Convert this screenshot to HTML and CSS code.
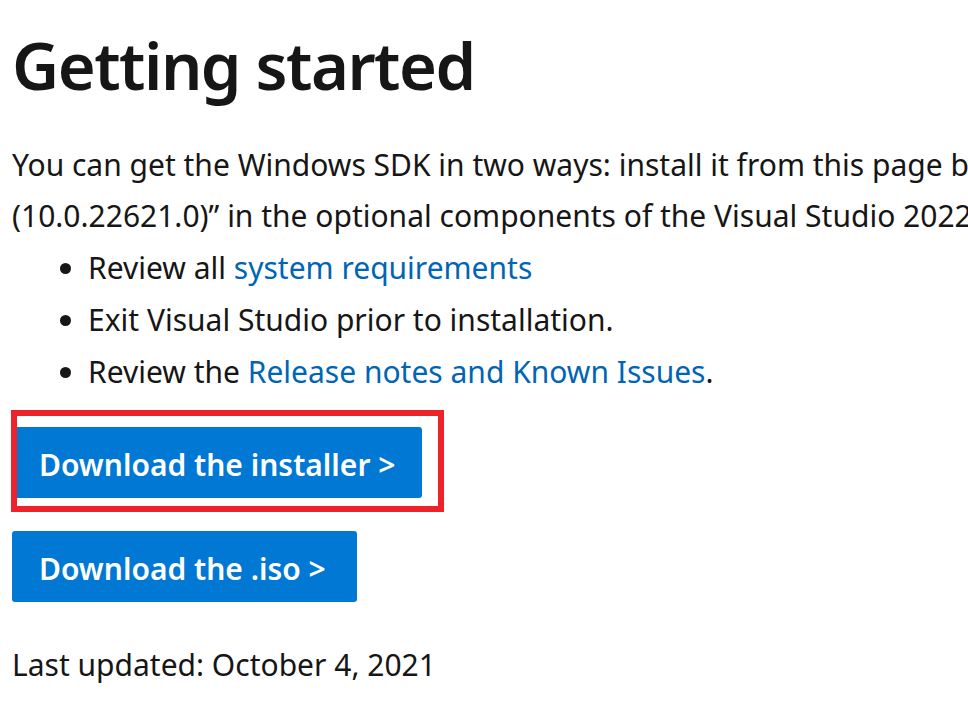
FILE: index.html
```html
<!DOCTYPE html>
<html lang="en">
<head>
<meta charset="utf-8">
<title>Getting started</title>
<link rel="stylesheet" href="styles.css">
</head>
<body>
<main class="content">
  <h1 class="title">Getting started</h1>
  <p class="intro">You can get the Windows SDK in two ways: install it from this page by selecting the download link or by selecting “Windows 11 SDK<br>(10.0.22621.0)” in the optional components of the Visual Studio 2022 Installer.</p>
  <ul class="checklist">
    <li>Review all <a href="#" class="link">system requirements</a></li>
    <li>Exit Visual Studio prior to installation.</li>
    <li>Review the <a href="#" class="link">Release notes and Known Issues</a>.</li>
  </ul>
  <div class="actions">
    <div class="highlighted">
      <a href="#" class="btn btn-wide">Download the installer &gt;</a>
      <span class="callout"></span>
    </div>
    <a href="#" class="btn btn-iso">Download the .iso &gt;</a>
  </div>
  <p class="updated">Last updated: October 4, 2021</p>
</main>
</body>
</html>
```
FILE: styles.css
```css
html, body {
  margin: 0;
  padding: 0;
  overflow: hidden;
  background: #ffffff;
}

body {
  font-family: "Noto Sans", "Open Sans", sans-serif;
  color: #161616;
  width: 968px;
  height: 716px;
}

.content {
  padding-left: 12px;
  white-space: nowrap;
}

.title {
  font-size: 65px;
  font-weight: 600;
  line-height: 80px;
  margin: 25px 0 0 0;
  letter-spacing: -1.5px;
}

.intro {
  font-size: 30px;
  line-height: 51px;
  margin: 34px 0 0 0;
}

.checklist {
  font-size: 30px;
  line-height: 52px;
  margin: 1px 0 0 0;
  padding-left: 76px;
}

.link {
  color: #0065b3;
  text-decoration: none;
}

.actions {
  display: flex;
  flex-direction: column;
  align-items: flex-start;
  gap: 33px;
  margin-top: 29px;
}

.highlighted {
  position: relative;
}

.btn {
  display: inline-flex;
  align-items: center;
  height: 71px;
  box-sizing: border-box;
  padding: 4px 27px 0 27px;
  background: #0078d4;
  color: #ffffff;
  font-size: 30px;
  font-weight: 600;
  text-decoration: none;
  border-radius: 3px;
}

.btn-wide {
  width: 410px;
}

.btn-iso {
  width: 345px;
}

.callout {
  position: absolute;
  left: -1px;
  top: -17px;
  width: 433px;
  height: 102px;
  box-sizing: border-box;
  border: 6px solid #ee2329;
}

.updated {
  font-size: 30px;
  line-height: 51px;
  margin: 37px 0 0 0;
}
```
